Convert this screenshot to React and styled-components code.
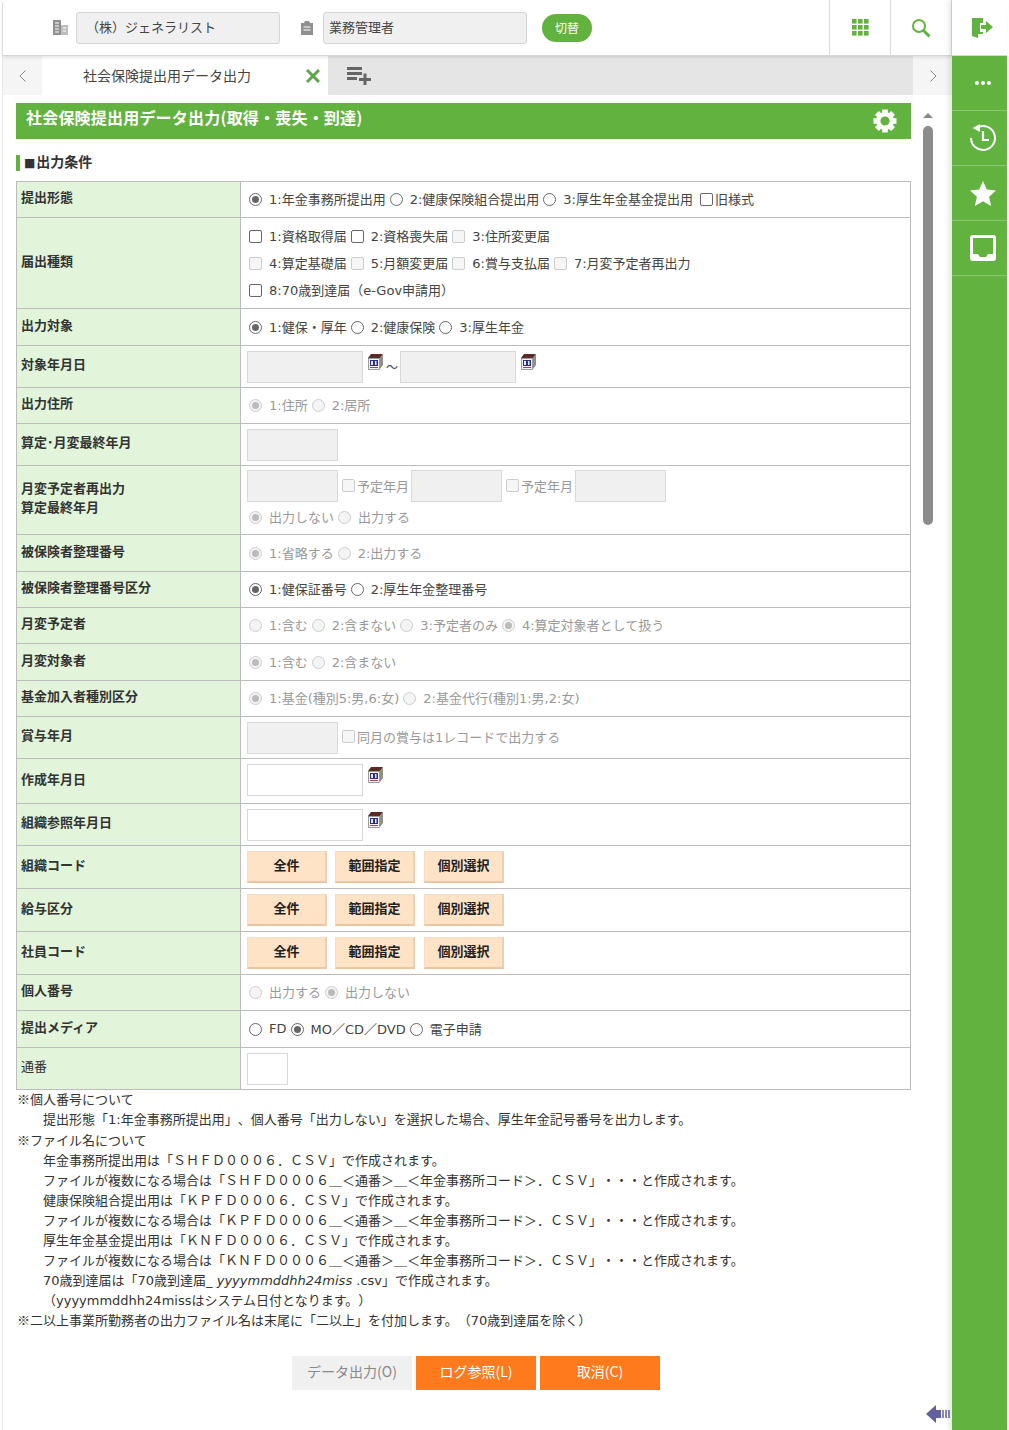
import styled, { createGlobalStyle } from "styled-components";
import { Fragment } from "react";

const GREEN = "#62b23f";

const Global = createGlobalStyle`
  html, body { margin: 0; padding: 0; background: #fff; }
  body {
    font-family: "DejaVu Sans", "Noto Sans CJK JP", sans-serif;
    font-size: 13px;
    color: #333;
    text-spacing-trim: space-all;
  }
`;

const Shell = styled.div`
  width: 1009px;
  height: 1430px;
  display: flex;
  overflow: hidden;
  background: #fff;
`;

const Main = styled.div`
  width: 950px;
  margin-left: 2px;
  border-left: 1px solid #e8e8e8;
  border-top-left-radius: 6px;
  box-sizing: border-box;
  display: flex;
  flex-direction: column;
  position: relative;
`;

const TopBar = styled.header`
  height: 56px;
  box-sizing: border-box;
  display: flex;
  align-items: center;
  padding-left: 50px;
  border-bottom: 1px solid #d6d6d6;
  box-shadow: 0 1px 4px rgba(0, 0, 0, 0.12);
  position: relative;
  z-index: 2;
`;

const TopIcon = styled.span`
  width: 16px;
  height: 16px;
  display: flex;
  margin-right: 7px;
`;

const TopField = styled.div`
  width: 204px;
  height: 32px;
  box-sizing: border-box;
  background: #f0f0f0;
  border: 1px solid #d4d4d4;
  border-radius: 3px;
  line-height: 27px;
  padding-left: ${(p) => p.$pad}px;
  margin-right: ${(p) => p.$gap}px;
  color: #444;
  font-family: "Noto Sans CJK JP", sans-serif;
  font-size: 13px;
`;

const SwitchButton = styled.div`
  width: 50px;
  height: 28px;
  margin-left: -1px;
  border-radius: 14px;
  background: ${GREEN};
  color: #fff;
  font-family: "Noto Sans CJK JP", sans-serif;
  font-size: 12px;
  line-height: 27px;
  text-align: center;
`;

const TopCells = styled.div`
  margin-left: auto;
  display: flex;
  height: 100%;
  border-right: 1px solid #dcdcdc;
`;

const TopCell = styled.div`
  width: 61px;
  box-sizing: border-box;
  border-left: 1px solid #dcdcdc;
  display: flex;
  align-items: center;
  justify-content: center;
`;

const TabBar = styled.nav`
  height: 39px;
  display: flex;
  background: #e5e5e5;
`;

const TabArrow = styled.div`
  width: 39px;
  background: #f5f5f5;
  display: flex;
  align-items: center;
  justify-content: center;
`;

const Tab = styled.div`
  width: 286px;
  background: #fff;
  display: flex;
  align-items: center;
  font-family: "Noto Sans CJK JP", sans-serif;
  font-size: 14px;
  color: #444;
  padding: 0 0 2px 41px;
  box-sizing: border-box;
  position: relative;
`;

const TabClose = styled.svg`
  position: absolute;
  right: 8px;
  top: 13px;
`;

const AddTab = styled.div`
  flex: 1;
  display: flex;
  align-items: center;
  padding-left: 19px;
`;

const Content = styled.div`
  flex: 1;
  display: flex;
  min-height: 0;
`;

const Form = styled.div`
  width: 895px;
  margin-left: 13px;
`;

const TitleBar = styled.div`
  margin-top: 8px;
  height: 36px;
  background: ${GREEN};
  color: #fff;
  font-family: "Noto Sans CJK JP", sans-serif;
  font-weight: 700;
  font-size: 16px;
  display: flex;
  align-items: center;
  justify-content: space-between;
  padding: 0 14px 0 10px;
`;

const TitleText = styled.span`
  position: relative;
  top: -4px;
  letter-spacing: 0.2px;
`;

const SectionHead = styled.h3`
  margin: 16px 0 10px;
  height: 16px;
  border-left: 4px solid ${GREEN};
  padding-left: 4px;
  font-size: 14px;
  line-height: 14px;
  font-weight: 700;
  color: #333;
`;

const HeadMark = styled.span`
  font-size: 12px;
  font-weight: 400;
  margin-right: 1px;
`;

const Table = styled.table`
  width: 895px;
  table-layout: fixed;
  border-collapse: collapse;
`;

const Row = styled.tr`
  height: ${(p) => p.$h}px;
`;

const Label = styled.th`
  width: 224px;
  box-sizing: border-box;
  background: #e2f4da;
  border: 1px solid #bcbcbc;
  padding: 0 4px 6px;
  text-align: left;
  font-family: "Noto Sans CJK JP", sans-serif;
  font-size: 13px;
  line-height: 19px;
  font-weight: ${(p) => (p.$plain ? 400 : 700)};
  color: #333;
`;

const Cell = styled.td`
  border: 1px solid #bcbcbc;
  padding: 0 0 ${(p) => p.$pb || 0}px 6px;
  font-size: 13px;
  color: #444;
  vertical-align: middle;
`;

const Line = styled.div`
  display: flex;
  align-items: center;
  height: ${(p) => p.$h || 18}px;
  white-space: nowrap;
  color: ${(p) => (p.$off ? "#999" : "#444")};
  & > span {
    padding-bottom: 2px;
  }
`;

const Radio = styled.input.attrs({ type: "radio", readOnly: true })`
  appearance: none;
  width: 13px;
  height: 13px;
  margin: 0 7px 0 ${(p) => (p.$first ? 2 : 4)}px;
  flex: none;
  border-radius: 50%;
  border: 1px solid ${(p) => (p.disabled ? "#ccc" : "#666")};
  background: ${(p) => (p.disabled ? "#f4f4f4" : "#fff")};
  position: relative;
  &:checked::after {
    content: "";
    position: absolute;
    inset: 2px;
    border-radius: 50%;
    background: ${(p) => (p.disabled ? "#bbb" : "#666")};
  }
`;

const Check = styled.input.attrs({ type: "checkbox", readOnly: true })`
  appearance: none;
  width: 13px;
  height: 13px;
  margin: 0 ${(p) => p.$after ?? 7}px 0 ${(p) => p.$before ?? 2}px;
  flex: none;
  border-radius: 2px;
  border: 1px solid ${(p) => (p.disabled ? "#ccc" : "#666")};
  background: ${(p) => (p.disabled ? "#f6f6f6" : "#fff")};
  position: relative;
  top: ${(p) => p.$top || 0}px;
`;

const TextBox = styled.div`
  width: ${(p) => p.$w}px;
  height: 32px;
  margin-left: ${(p) => p.$ml || 0}px;
  box-sizing: border-box;
  flex: none;
  background: ${(p) => (p.$on ? "#fff" : "#f0f0f0")};
  border: 1px solid #d8d8d8;
`;

const CalIcon = styled.svg`
  flex: none;
  margin: 0 3px 10px 5px;
`;

const Tilde = styled.span`
  margin: 2px 2px 0 0;
  font-size: 12px;
`;

const Buttons = styled.div`
  display: flex;
  gap: 8px;
  & > :nth-child(3) {
    margin-left: 1px;
  }
`;

const PickButton = styled.div`
  width: 80px;
  height: 32px;
  box-sizing: border-box;
  background: #ffe3c6;
  border: 1px solid #f5dcc4;
  border-bottom: 2px solid #ecc49f;
  border-right: 2px solid #f0cfae;
  text-align: center;
  line-height: 26px;
  font-family: "Noto Sans CJK JP", sans-serif;
  font-size: 13px;
  font-weight: 700;
  color: #222;
`;

const Notes = styled.div`
  font-size: 13px;
  color: #333;
  white-space: pre;
`;

const NoteLine = styled.div`
  height: 20px;
  line-height: ${(p) => (p.$mark ? 18 : 20)}px;
  padding-left: ${(p) => p.$indent}px;
  &:nth-child(2) {
    margin-bottom: 1px;
  }
`;

const NoteMark = styled.span`
  font-family: "Noto Sans CJK JP", sans-serif;
`;

const Actions = styled.div`
  display: flex;
  gap: 4px;
  margin: 25px 0 0 276px;
`;

const Action = styled.div`
  width: 120px;
  height: 34px;
  line-height: 31px;
  text-align: center;
  font-family: "Noto Sans CJK JP", sans-serif;
  font-size: 14px;
  background: ${(p) => (p.$off ? "#f0f0f0" : "#ff7a1c")};
  color: ${(p) => (p.$off ? "#888" : "#fff")};
`;

const ScrollCol = styled.div`
  width: 17px;
  margin-left: 8px;
  display: flex;
  flex-direction: column;
  align-items: center;
`;

const ScrollUp = styled.div`
  margin-top: 18px;
  width: 0;
  height: 0;
  border-left: 5px solid transparent;
  border-right: 5px solid transparent;
  border-bottom: 5px solid #888;
`;

const ScrollThumb = styled.div`
  margin-top: 8px;
  width: 10px;
  height: 399px;
  border-radius: 5px;
  background: #8c8c8c;
`;

const BackArrow = styled.svg`
  position: absolute;
  right: 0;
  bottom: 6px;
`;

const Rail = styled.aside`
  width: 55px;
  display: flex;
  flex-direction: column;
  position: relative;
  z-index: 3;
  box-shadow: -3px 0 5px rgba(0, 0, 0, 0.1);
`;

const ExitCell = styled.div`
  height: 56px;
  background: #fff;
  border-bottom: 1px solid #d6d6d6;
  box-sizing: border-box;
  display: flex;
  align-items: center;
  justify-content: center;
  padding-left: 7px;
`;

const RailBody = styled.div`
  flex: 1;
  background: ${GREEN};
`;

const RailItem = styled.div`
  height: 54px;
  box-sizing: content-box;
  border-bottom: 1px solid #8cc873;
  display: flex;
  align-items: center;
  justify-content: center;
  padding-left: 7px;
`;

const ChevronLeft = () => (
  <svg width="8" height="12" viewBox="0 0 8 12" fill="none" stroke="#888" strokeWidth="1">
    <path d="M6.5 .5 1 6l5.5 5.5" />
  </svg>
);

const ChevronRight = () => (
  <svg width="8" height="12" viewBox="0 0 8 12" fill="none" stroke="#888" strokeWidth="1">
    <path d="M1.5 .5 7 6l-5.5 5.5" />
  </svg>
);

const Calendar = () => (
  <CalIcon width="15" height="16" viewBox="0 0 15 16">
    <path d="M0 4 3 0h12l-3 4z" fill="#5a2a26" />
    <path d="M12 4l3-4v11l-3 4z" fill="#8f8f86" />
    <rect x=".5" y="4.500" width="11" height="11" fill="#f4f2ec" stroke="#777" strokeWidth=".7" />
    <rect x="2" y="6" width="8" height="6" fill="#2b2f8f" />
    <rect x="3" y="7" width="2" height="4" fill="#e8e8ff" />
    <rect x="7" y="7" width="1.500" height="4" fill="#e8e8ff" />
    <rect x="2" y="13" width="8" height="1" fill="#b0405a" />
  </CalIcon>
);

const Gear = () => (
  <svg width="24" height="24" viewBox="0 0 24 24" fill="#fff">
    {[0, 45, 90, 135, 180, 225, 270, 315].map((a) => (
      <rect key={a} x="9.200" y="0.500" width="5.600" height="6" transform={`rotate(${a} 12 12)`} />
    ))}
    <circle cx="12" cy="12" r="6.800" fill="none" stroke="#fff" strokeWidth="4.400" />
  </svg>
);

const R = ({ on, off, first, children }) => (
  <Fragment>
    <Radio checked={!!on} disabled={!!off} $first={first} />
    <span>{children}</span>
  </Fragment>
);

const RadioLine = ({ items, selected, off, h }) => (
  <Line $off={off} $h={h}>
    {items.map((t, i) => (
      <R key={t} on={i === selected} off={off} first={i === 0}>{t}</R>
    ))}
  </Line>
);

const KindLine = ({ items, h }) => (
  <Line $h={h}>
    {items.map(([t, off], i) => (
      <Fragment key={t}>
        <Check disabled={off} $before={i === 0 ? 2 : 4} />
        <span>{t}</span>
      </Fragment>
    ))}
  </Line>
);

const Pickers = () => (
  <Buttons>
    <PickButton>全件</PickButton>
    <PickButton>範囲指定</PickButton>
    <PickButton>個別選択</PickButton>
  </Buttons>
);

const noteLines = [
  [0, "個人番号について", true],
  [26, "提出形態「1:年金事務所提出用」、個人番号「出力しない」を選択した場合、厚生年金記号番号を出力します。"],
  [0, "ファイル名について", true],
  [26, "年金事務所提出用は「ＳＨＦＤ０００６．ＣＳＶ」で作成されます。"],
  [26, "ファイルが複数になる場合は「ＳＨＦＤ０００６＿＜通番＞＿＜年金事務所コード＞．ＣＳＶ」・・・と作成されます。"],
  [26, "健康保険組合提出用は「ＫＰＦＤ０００６．ＣＳＶ」で作成されます。"],
  [26, "ファイルが複数になる場合は「ＫＰＦＤ０００６＿＜通番＞＿＜年金事務所コード＞．ＣＳＶ」・・・と作成されます。"],
  [26, "厚生年金基金提出用は「ＫＮＦＤ０００６．ＣＳＶ」で作成されます。"],
  [26, "ファイルが複数になる場合は「ＫＮＦＤ０００６＿＜通番＞＿＜年金事務所コード＞．ＣＳＶ」・・・と作成されます。"],
  [26, <Fragment>70歳到達届は「70歳到達届_ <em>yyyymmddhh24miss</em> .csv」で作成されます。</Fragment>],
  [26, "（yyyymmddhh24missはシステム日付となります。）"],
  [0, "二以上事業所勤務者の出力ファイル名は末尾に「二以上」を付加します。（70歳到達届を除く）", true],
];

export default function App() {
  return (
    <Shell>
      <Global />
      <Main>
        <TopBar>
          <TopIcon>
            <svg width="16" height="16" viewBox="0 0 16 16">
              <rect x="0" y="0" width="8" height="15" fill="#8f8f8f" />
              <rect x="8" y="5" width="7" height="10" fill="#bdbdbd" />
              <path d="M2 3h4M2 6h4M2 9h4M2 12h4" stroke="#fff" strokeWidth="1" />
              <path d="M10 8h3M10 11h3" stroke="#fff" strokeWidth="1" />
            </svg>
          </TopIcon>
          <TopField $pad={9} $gap={20}>（株）ジェネラリスト</TopField>
          <TopIcon>
            <svg width="14" height="16" viewBox="0 0 14 16">
              <path d="M1 3h3l1-2h4l1 2h3v12H1z" fill="#8f8f8f" />
              <path d="M3.5 7h7M3.5 10h7" stroke="#fff" strokeWidth="1.2" />
            </svg>
          </TopIcon>
          <TopField $pad={5} $gap={16}>業務管理者</TopField>
          <SwitchButton>切替</SwitchButton>
          <TopCells>
            <TopCell>
              <svg width="17" height="17" viewBox="0 0 17 17" fill={GREEN}>
                {[0, 6, 12].flatMap((y) => [0, 6, 12].map((x) => (
                  <rect key={`${x}-${y}`} x={x} y={y} width="4.6" height="4.6" />
                )))}
              </svg>
            </TopCell>
            <TopCell>
              <svg width="20" height="20" viewBox="0 0 20 20" fill="none" stroke={GREEN}>
                <circle cx="8" cy="8" r="6" strokeWidth="2" />
                <path d="M12.5 12.5 18.5 18.5" strokeWidth="3" />
              </svg>
            </TopCell>
          </TopCells>
        </TopBar>
        <TabBar>
          <TabArrow><ChevronLeft /></TabArrow>
          <Tab>
            社会保険提出用データ出力
            <TabClose width="14" height="14" viewBox="0 0 14 14" stroke="#5fa64a" strokeWidth="3">
              <path d="M1 1l12 12M13 1 1 13" />
            </TabClose>
          </Tab>
          <AddTab>
            <svg width="24" height="18" viewBox="0 0 24 18" fill="#666">
              <rect x="0" y="0" width="15" height="3" />
              <rect x="0" y="5" width="15" height="3" />
              <rect x="0" y="10" width="10" height="3" />
              <rect x="12" y="11" width="12" height="3" />
              <rect x="16.500" y="6.500" width="3" height="11.500" />
            </svg>
          </AddTab>
          <TabArrow><ChevronRight /></TabArrow>
        </TabBar>
        <Content>
          <Form>
            <TitleBar>
              <TitleText>社会保険提出用データ出力(取得・喪失・到達)</TitleText>
              <Gear />
            </TitleBar>
            <SectionHead><HeadMark>■</HeadMark>出力条件</SectionHead>
            <Table>
              <colgroup>
                <col width="224" />
                <col />
              </colgroup>
              <tbody>
                <Row $h={36}>
                  <Label>提出形態</Label>
                  <Cell>
                    <Line>
                      <R on first>1:年金事務所提出用</R>
                      <R>2:健康保険組合提出用</R>
                      <R>3:厚生年金基金提出用</R>
                      <Check $before={7} $after={2} />
                      <span>旧様式</span>
                    </Line>
                  </Cell>
                </Row>
                <Row $h={91}>
                  <Label>届出種類</Label>
                  <Cell>
                    <KindLine h={27} items={[["1:資格取得届"], ["2:資格喪失届"], ["3:住所変更届", true]]} />
                    <KindLine h={27} items={[["4:算定基礎届", true], ["5:月額変更届", true], ["6:賞与支払届", true], ["7:月変予定者再出力", true]]} />
                    <KindLine h={27} items={[["8:70歳到達届（e-Gov申請用）"]]} />
                  </Cell>
                </Row>
                <Row $h={37}>
                  <Label>出力対象</Label>
                  <Cell><RadioLine items={["1:健保・厚年", "2:健康保険", "3:厚生年金"]} selected={0} /></Cell>
                </Row>
                <Row $h={42}>
                  <Label>対象年月日</Label>
                  <Cell>
                    <Line $h={32}>
                      <TextBox $w={116} />
                      <Calendar />
                      <Tilde>～</Tilde>
                      <TextBox $w={116} />
                      <Calendar />
                    </Line>
                  </Cell>
                </Row>
                <Row $h={36}>
                  <Label>出力住所</Label>
                  <Cell><RadioLine off items={["1:住所", "2:居所"]} selected={0} /></Cell>
                </Row>
                <Row $h={42}>
                  <Label>算定･月変最終年月</Label>
                  <Cell><TextBox $w={91} /></Cell>
                </Row>
                <Row $h={69}>
                  <Label>月変予定者再出力<br />算定最終年月</Label>
                  <Cell>
                    <Line $h={34} $off>
                      <TextBox $w={91} />
                      <Check disabled $before={4} $after={2} $top={-1} />
                      <span>予定年月</span>
                      <TextBox $w={91} $ml={2} />
                      <Check disabled $before={4} $after={2} $top={-1} />
                      <span>予定年月</span>
                      <TextBox $w={91} $ml={2} />
                    </Line>
                    <Line $h={28} $off>
                      <R on off first>出力しない</R>
                      <R off>出力する</R>
                    </Line>
                  </Cell>
                </Row>
                <Row $h={37}>
                  <Label>被保険者整理番号</Label>
                  <Cell><RadioLine off items={["1:省略する", "2:出力する"]} selected={0} /></Cell>
                </Row>
                <Row $h={36}>
                  <Label>被保険者整理番号区分</Label>
                  <Cell><RadioLine items={["1:健保証番号", "2:厚生年金整理番号"]} selected={0} /></Cell>
                </Row>
                <Row $h={36}>
                  <Label>月変予定者</Label>
                  <Cell><RadioLine off items={["1:含む", "2:含まない", "3:予定者のみ", "4:算定対象者として扱う"]} selected={3} /></Cell>
                </Row>
                <Row $h={37}>
                  <Label>月変対象者</Label>
                  <Cell><RadioLine off items={["1:含む", "2:含まない"]} selected={0} /></Cell>
                </Row>
                <Row $h={36}>
                  <Label>基金加入者種別区分</Label>
                  <Cell><RadioLine off items={["1:基金(種別5:男,6:女)", "2:基金代行(種別1:男,2:女)"]} selected={0} /></Cell>
                </Row>
                <Row $h={42}>
                  <Label>賞与年月</Label>
                  <Cell>
                    <Line $h={32} $off>
                      <TextBox $w={91} />
                      <Check disabled $before={4} $after={2} $top={-1} />
                      <span>同月の賞与は1レコードで出力する</span>
                    </Line>
                  </Cell>
                </Row>
                <Row $h={45}>
                  <Label>作成年月日</Label>
                  <Cell $pb={3}>
                    <Line $h={32}><TextBox $w={116} $on /><Calendar /></Line>
                  </Cell>
                </Row>
                <Row $h={42}>
                  <Label>組織参照年月日</Label>
                  <Cell>
                    <Line $h={32}><TextBox $w={116} $on /><Calendar /></Line>
                  </Cell>
                </Row>
                <Row $h={43}>
                  <Label>組織コード</Label>
                  <Cell><Pickers /></Cell>
                </Row>
                <Row $h={43}>
                  <Label>給与区分</Label>
                  <Cell><Pickers /></Cell>
                </Row>
                <Row $h={43}>
                  <Label>社員コード</Label>
                  <Cell><Pickers /></Cell>
                </Row>
                <Row $h={36}>
                  <Label>個人番号</Label>
                  <Cell>
                    <Line $off>
                      <R off first>出力する</R>
                      <R on off>出力しない</R>
                    </Line>
                  </Cell>
                </Row>
                <Row $h={37}>
                  <Label>提出メディア</Label>
                  <Cell>
                    <Line>
                      <R first>FD</R>
                      <R on>MO／CD／DVD</R>
                      <R>電子申請</R>
                    </Line>
                  </Cell>
                </Row>
                <Row $h={42}>
                  <Label $plain>通番</Label>
                  <Cell><TextBox $w={41} $on /></Cell>
                </Row>
              </tbody>
            </Table>
            <Notes>
              {noteLines.map(([indent, text, mark], i) => (
                <NoteLine key={i} $indent={indent + 1} $mark={mark}>
                  {mark && <NoteMark>※</NoteMark>}
                  {text}
                </NoteLine>
              ))}
            </Notes>
            <Actions>
              <Action $off>データ出力(O)</Action>
              <Action>ログ参照(L)</Action>
              <Action>取消(C)</Action>
            </Actions>
          </Form>
          <ScrollCol>
            <ScrollUp />
            <ScrollThumb />
          </ScrollCol>
        </Content>
        <BackArrow width="26" height="20" viewBox="0 0 26 20">
          <path d="M0 10 10 1v5h5v8h-5v5z" fill="#62609f" />
          <path d="M17 6v8M20 6v8M23 6v8" stroke="#62609f" strokeWidth="1.500" />
        </BackArrow>
      </Main>
      <Rail>
        <ExitCell>
          <svg width="22" height="20" viewBox="0 0 22 20" fill={GREEN}>
            <path d="M0 0h11v5H8v9h3v2H6v4l-6-2z" />
            <path d="M9 7h5V3l7 6-7 6v-4H9z" />
          </svg>
        </ExitCell>
        <RailBody>
          <RailItem>
            <svg width="16" height="4" viewBox="0 0 16 4" fill="#fff">
              <circle cx="2" cy="2" r="2" /><circle cx="8" cy="2" r="2" /><circle cx="14" cy="2" r="2" />
            </svg>
          </RailItem>
          <RailItem>
            <svg width="28" height="28" viewBox="0 0 28 28" fill="none" stroke="#fff" strokeWidth="2">
              <path d="M9.200 3A12 12 0 1 1 2 14" />
              <path d="M3.500 4 11 0v8z" fill="#fff" stroke="none" />
              <path d="M14 7v9h6" strokeWidth="2.200" />
            </svg>
          </RailItem>
          <RailItem>
            <svg width="26" height="25" viewBox="0 0 26 25" fill="#fff">
              <path d="M13 0l3.800 8.500 9.200 1-6.900 6.200 2 9.300L13 20.200 4.900 25l2-9.300L0 9.500l9.200-1z" />
            </svg>
          </RailItem>
          <RailItem>
            <svg width="26" height="26" viewBox="0 0 26 26">
              <rect width="26" height="26" rx="3" fill="#fff" />
              <path d="M3 3h20v16h-5l-2 3h-6l-2-3H3z" fill={GREEN} />
            </svg>
          </RailItem>
        </RailBody>
      </Rail>
    </Shell>
  );
}
